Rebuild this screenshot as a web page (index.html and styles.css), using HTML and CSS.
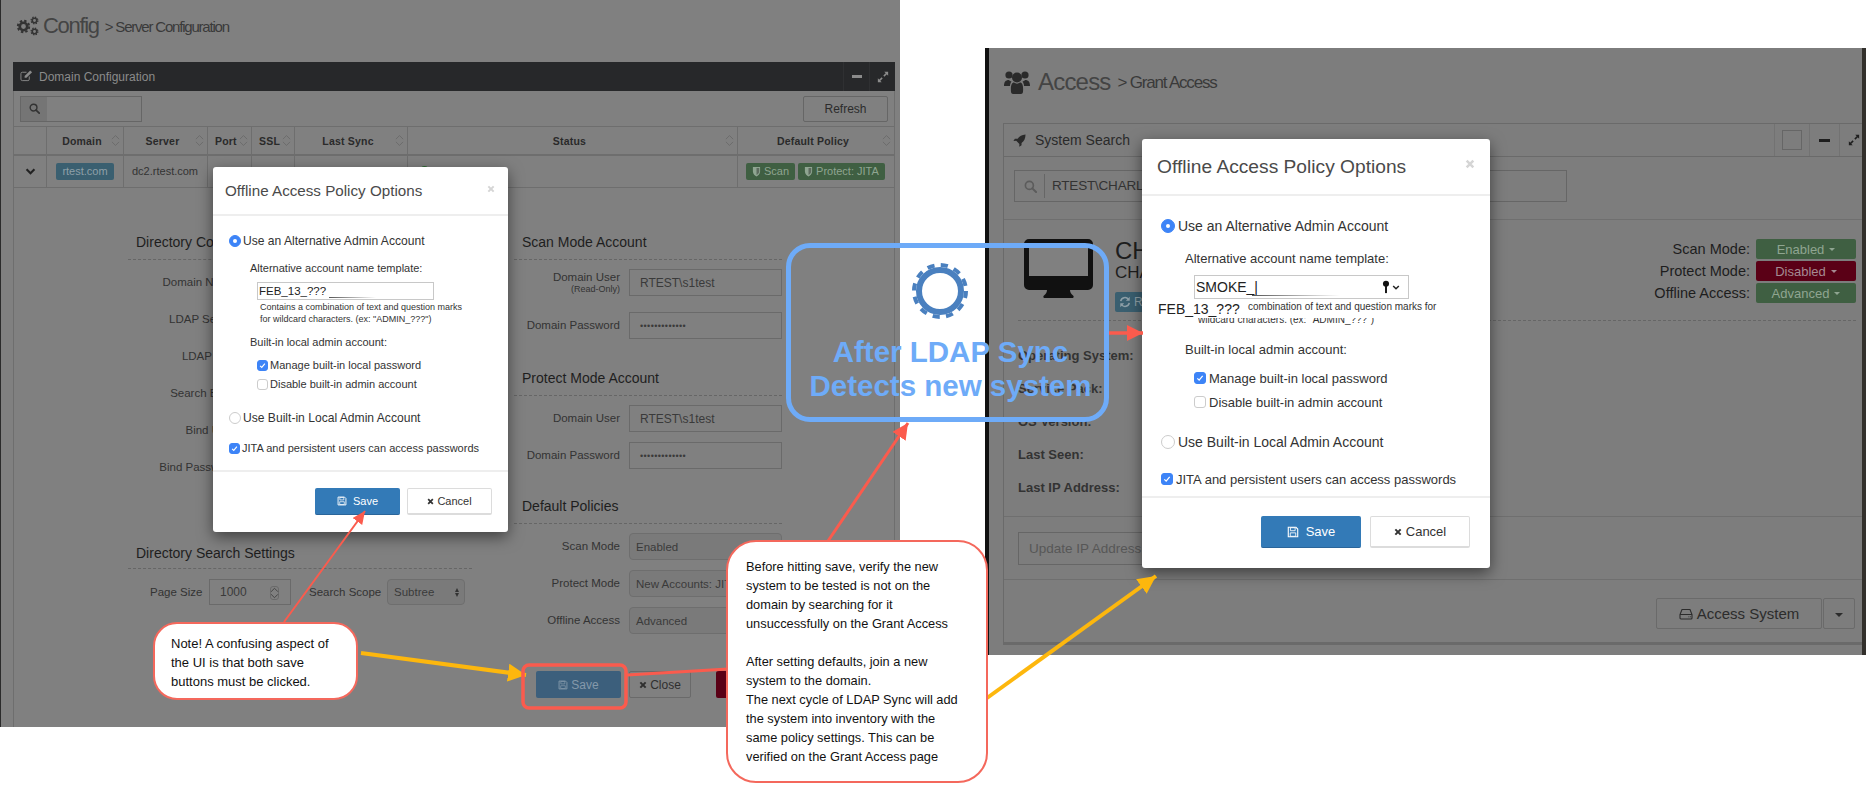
FILE: index.html
```html
<!DOCTYPE html>
<html>
<head>
    <meta charset="UTF-8">
    <title>LDAP Sync - Offline Access Policy</title>
    <link rel="stylesheet" href="styles.css">
</head>
<body>
<svg class="sprite" width="0" height="0">
    <defs>
        <symbol id="i-cog" viewBox="0 0 20 20">
            <circle cx="10" cy="10" r="5" fill="none" stroke="currentColor" stroke-width="3.6"/>
            <circle cx="10" cy="10" r="7.6" fill="none" stroke="currentColor" stroke-width="2.6" stroke-dasharray="3.2 2.77"/>
        </symbol>
        <symbol id="i-edit" viewBox="0 0 14 14">
            <path d="M10 8v3a1.5 1.5 0 0 1-1.500 1.500h-6A1.500 1.500 0 0 1 1 11V5a1.500 1.500 0 0 1 1.500-1.500H7" fill="none" stroke="currentColor" stroke-width="1"/>
            <path d="M5 7.500 11 1.500 13 3.500 7 9.500H5z" fill="currentColor"/>
        </symbol>
        <symbol id="i-search" viewBox="0 0 14 14">
            <circle cx="5.800" cy="5.800" r="4.300" fill="none" stroke="currentColor" stroke-width="1.800"/>
            <path d="M9 9l4 4" stroke="currentColor" stroke-width="2.200" stroke-linecap="round"/>
        </symbol>
        <symbol id="i-sort" viewBox="0 0 10 14">
            <path d="M1 5.500 5 1.500l4 4M1 8.500l4 4 4-4" fill="none" stroke="currentColor" stroke-width="1"/>
        </symbol>
        <symbol id="i-chevron" viewBox="0 0 12 8">
            <path d="M1.500 1.500 6 6l4.500-4.500" fill="none" stroke="currentColor" stroke-width="2.400"/>
        </symbol>
        <symbol id="i-shield" viewBox="0 0 10 12">
            <path d="M1 1h8v5c0 3-2.500 4.500-4 5.500C3.500 10.500 1 9 1 6z" fill="currentColor"/>
            <path d="M5 2v8c1-.7 3-2 3-4V2z" fill="#000" fill-opacity=".35"/>
        </symbol>
        <symbol id="i-expand" viewBox="0 0 14 14">
            <path d="M8 6l4-4M6 8l-4 4" stroke="currentColor" stroke-width="1.800"/>
            <path d="M8.500 1H13v4.500zM5.500 13H1V8.500z" fill="currentColor"/>
        </symbol>
        <symbol id="i-save" viewBox="0 0 14 14">
            <path d="M1.500 1.500h9l2 2v9h-11z" fill="none" stroke="currentColor" stroke-width="1.300"/>
            <path d="M4 2h5.500v3.500H4zM3.800 8h6.400v4H3.800z" fill="none" stroke="currentColor" stroke-width="1"/>
        </symbol>
        <symbol id="i-times" viewBox="0 0 12 12">
            <path d="M2 2l8 8M10 2l-8 8" stroke="currentColor" stroke-width="3"/>
        </symbol>
        <symbol id="i-rocket" viewBox="0 0 14 14">
            <path d="M13.500.5c-4 .2-6.500 1.800-8.500 4.500H2L.5 7.500l3-.2 3.400 3.400-.2 3 2.500-1.500V9.700c2.700-2 4.200-4.700 4.300-9.200z" fill="currentColor"/>
        </symbol>
        <symbol id="i-users" viewBox="0 0 26 24">
            <circle cx="5" cy="5" r="3.600" fill="currentColor"/>
            <circle cx="21" cy="5" r="3.600" fill="currentColor"/>
            <circle cx="13" cy="7.500" r="5" fill="currentColor"/>
            <path d="M0 16c0-4 1.500-6 5-6 1 1 1.500 1.300 2.500 1.500-1 1.500-1.500 2.800-1.500 4.500zM26 16c0-4-1.500-6-5-6-1 1-1.500 1.300-2.500 1.500 1 1.500 1.500 2.800 1.500 4.500z" fill="currentColor"/>
            <path d="M7 22c-.5-6 .5-9.500 3-9.500 2 1.500 4 1.500 6 0 2.500 0 3.500 3.500 3 9.500-.2 1.300-1 2-2 2H9c-1 0-1.800-.7-2-2z" fill="currentColor"/>
        </symbol>
        <symbol id="i-monitor" viewBox="0 0 69 59">
            <path d="M5 0h59a5 5 0 0 1 5 5v41a5 5 0 0 1-5 5H46c0 2 1 4 3 5.500 1 .7 1 2.500-1 2.500H21c-2 0-2-1.800-1-2.500 2-1.500 3-3.500 3-5.500H5a5 5 0 0 1-5-5V5a5 5 0 0 1 5-5z" fill="currentColor"/>
            <rect x="5" y="5" width="59" height="32" fill="#808080"/>
        </symbol>
        <symbol id="i-refresh" viewBox="0 0 14 14">
            <path d="M2 6a5 5 0 0 1 9-2M12 8a5 5 0 0 1-9 2" fill="none" stroke="currentColor" stroke-width="1.700"/>
            <path d="M12.500 1v4.500H8zM1.500 13V8.500H6z" fill="currentColor"/>
        </symbol>
        <symbol id="i-hdd" viewBox="0 0 14 12">
            <path d="M3 1.500h8l2 5v3.500a1 1 0 0 1-1 1H2a1 1 0 0 1-1-1V6.500zM1 6.500h12" fill="none" stroke="currentColor" stroke-width="1.100"/>
            <path d="M9.500 8.800h.8M11.200 8.800h.8" stroke="currentColor" stroke-width="1"/>
        </symbol>
        <symbol id="i-key" viewBox="0 0 10 16">
            <circle cx="5" cy="4" r="3.800" fill="currentColor"/>
            <path d="M3.800 6h2.400v8.500L5 16l-1.200-1.500z" fill="currentColor"/>
        </symbol>
        <symbol id="i-tick" viewBox="0 0 12 12">
            <path d="M2.800 6.400 5 8.600l4.200-5.200" fill="none" stroke="#fff" stroke-width="1.500"/>
        </symbol>
    </defs>
</svg>

<div class="canvas">

    <!-- left screenshot: server configuration -->
    <section class="shot shot-config">
        <div class="page-title">
            <span class="title-cogs">
                <svg class="cog-big"><use href="#i-cog"/></svg>
                <svg class="cog-a"><use href="#i-cog"/></svg>
                <svg class="cog-b"><use href="#i-cog"/></svg>
            </span>
            <span class="title-main">Config</span>
            <span class="title-sub">&gt; Server Configuration</span>
        </div>

        <div class="panel">
            <div class="panel-head">
                <svg class="ic-edit"><use href="#i-edit"/></svg>
                <span class="panel-name">Domain Configuration</span>
                <span class="head-tool"><i class="minus"></i></span>
                <span class="head-tool"><svg class="ic-expand"><use href="#i-expand"/></svg></span>
            </div>
            <div class="toolbar">
                <div class="search-mini">
                    <span class="search-addon"><svg class="ic-search"><use href="#i-search"/></svg></span>
                </div>
                <div class="btn-refresh">Refresh</div>
            </div>
            <div class="tbl tbl-head">
                <div class="th"></div>
                <div class="th">Domain<svg class="ic-sort"><use href="#i-sort"/></svg></div>
                <div class="th">Server<svg class="ic-sort"><use href="#i-sort"/></svg></div>
                <div class="th th-narrow">Port<svg class="ic-sort"><use href="#i-sort"/></svg></div>
                <div class="th th-narrow">SSL<svg class="ic-sort"><use href="#i-sort"/></svg></div>
                <div class="th">Last Sync<svg class="ic-sort"><use href="#i-sort"/></svg></div>
                <div class="th">Status<svg class="ic-sort"><use href="#i-sort"/></svg></div>
                <div class="th">Default Policy<svg class="ic-sort"><use href="#i-sort"/></svg></div>
            </div>
            <div class="tbl tbl-row">
                <div class="td td-center"><svg class="ic-chevron"><use href="#i-chevron"/></svg></div>
                <div class="td td-center"><span class="tag tag-teal">rtest.com</span></div>
                <div class="td td-text">dc2.rtest.com</div>
                <div class="td"></div>
                <div class="td"></div>
                <div class="td"></div>
                <div class="td td-status"><i class="dot"></i></div>
                <div class="td td-policy">
                    <span class="tag tag-green"><svg class="ic-shield"><use href="#i-shield"/></svg>Scan</span>
                    <span class="tag tag-green"><svg class="ic-shield"><use href="#i-shield"/></svg>Protect: JITA</span>
                </div>
            </div>

            <div class="form">
                <div class="form-col">
                    <h3 class="form-title">Directory Configuration</h3>
                    <div class="left-row">Domain Name</div>
                    <div class="left-row">LDAP Server</div>
                    <div class="left-row">LDAP Port</div>
                    <div class="left-row">Search Base</div>
                    <div class="left-row">Bind User</div>
                    <div class="left-row">Bind Password</div>
                    <h3 class="form-title title-search">Directory Search Settings</h3>
                    <div class="search-settings">
                        <span class="lbl-page">Page Size</span>
                        <span class="field field-page">1000<span class="spin"><svg class="ic-sort"><use href="#i-sort"/></svg></span></span>
                        <span class="lbl-scope">Search Scope</span>
                        <span class="select select-scope">Subtree<i class="double-caret"></i></span>
                    </div>
                </div>
                <div class="form-col">
                    <h3 class="form-title">Scan Mode Account</h3>
                    <div class="field-row row-tall">
                        <label>Domain User<small>(Read-Only)</small></label>
                        <span class="field">RTEST\s1test</span>
                    </div>
                    <div class="field-row">
                        <label>Domain Password</label>
                        <span class="field field-pass">•••••••••••••</span>
                    </div>
                    <h3 class="form-title title-protect">Protect Mode Account</h3>
                    <div class="field-row">
                        <label>Domain User</label>
                        <span class="field">RTEST\s1test</span>
                    </div>
                    <div class="field-row">
                        <label>Domain Password</label>
                        <span class="field field-pass">•••••••••••••</span>
                    </div>
                    <h3 class="form-title title-default">Default Policies</h3>
                    <div class="field-row">
                        <label>Scan Mode</label>
                        <span class="select">Enabled</span>
                    </div>
                    <div class="field-row">
                        <label>Protect Mode</label>
                        <span class="select">New Accounts: JITA</span>
                    </div>
                    <div class="field-row">
                        <label>Offline Access</label>
                        <span class="select">Advanced</span>
                    </div>
                    <div class="form-actions">
                        <span class="act act-save"><svg class="ic-save"><use href="#i-save"/></svg>Save</span>
                        <span class="act act-close"><svg class="ic-times"><use href="#i-times"/></svg>Close</span>
                        <span class="act act-red"></span>
                    </div>
                </div>
            </div>
        </div>

        <div class="modal modal-sm">
            <div class="modal-head">
                <span class="modal-title">Offline Access Policy Options</span>
                <svg class="modal-x"><use href="#i-times"/></svg>
            </div>
            <div class="modal-body">
                <div class="opt opt-first"><i class="radio on"></i>Use an Alternative Admin Account</div>
                <div class="opt-label opt-template">Alternative account name template:</div>
                <div class="tpl-input"><span>FEB_13_???</span><i class="fade-line"></i></div>
                <div class="help">
                    <p>Contains a combination of text and question marks</p>
                    <p>for wildcard characters. (ex: "ADMIN_???")</p>
                </div>
                <div class="opt-label opt-builtin">Built-in local admin account:</div>
                <div class="opt opt-sub opt-manage"><i class="check on"><svg><use href="#i-tick"/></svg></i>Manage built-in local password</div>
                <div class="opt opt-sub opt-disable"><i class="check"></i>Disable built-in admin account</div>
                <div class="opt opt-local"><i class="radio"></i>Use Built-in Local Admin Account</div>
                <div class="opt opt-jita"><i class="check on"><svg><use href="#i-tick"/></svg></i>JITA and persistent users can access passwords</div>
            </div>
            <div class="modal-foot">
                <span class="mbtn mbtn-primary"><svg class="ic-save"><use href="#i-save"/></svg>Save</span>
                <span class="mbtn mbtn-plain"><svg class="ic-times"><use href="#i-times"/></svg>Cancel</span>
            </div>
        </div>
    </section>

    <!-- right screenshot: grant access -->
    <section class="shot shot-access">
        <div class="page-title">
            <svg class="ic-users"><use href="#i-users"/></svg>
            <span class="title-main">Access</span>
            <span class="title-sub">&gt; Grant Access</span>
        </div>

        <div class="panel">
            <div class="panel-head">
                <svg class="ic-rocket"><use href="#i-rocket"/></svg>
                <span class="panel-name">System Search</span>
                <span class="head-tool tool-check"><i class="box"></i></span>
                <span class="head-tool tool-min"><i class="minus"></i></span>
                <span class="head-tool tool-exp"><svg class="ic-expand"><use href="#i-expand"/></svg></span>
            </div>
            <div class="search-wrap">
                <div class="search-big">
                    <svg class="ic-search"><use href="#i-search"/></svg>
                    <span class="search-text">RTEST\CHARLIE</span>
                </div>
            </div>
            <div class="system">
                <div class="system-top">
                    <svg class="ic-monitor"><use href="#i-monitor"/></svg>
                    <div class="system-name">
                        <div class="name-main">CHARLIE</div>
                        <div class="name-sub">CHARLIE</div>
                        <span class="tag-refresh"><svg><use href="#i-refresh"/></svg>Refresh</span>
                    </div>
                    <div class="system-modes">
                        <div class="mode"><span>Scan Mode:</span><b class="mode-btn mode-green">Enabled<i class="caret"></i></b></div>
                        <div class="mode"><span>Protect Mode:</span><b class="mode-btn mode-red">Disabled<i class="caret"></i></b></div>
                        <div class="mode"><span>Offline Access:</span><b class="mode-btn mode-green">Advanced<i class="caret"></i></b></div>
                    </div>
                </div>
                <div class="facts">
                    <div>Operating System:</div>
                    <div>Service Pack:</div>
                    <div>OS Version:</div>
                    <div>Last Seen:</div>
                    <div>Last IP Address:</div>
                </div>
            </div>
            <div class="update-ip">
                <div class="update-box">Update IP Address</div>
            </div>
            <div class="access-actions">
                <span class="access-btn"><svg class="ic-hdd"><use href="#i-hdd"/></svg>Access System</span>
                <span class="access-more"><i class="caret"></i></span>
            </div>
        </div>

        <div class="modal modal-lg">
            <div class="modal-head">
                <span class="modal-title">Offline Access Policy Options</span>
                <svg class="modal-x"><use href="#i-times"/></svg>
            </div>
            <div class="modal-body">
                <div class="opt opt-first"><i class="radio on"></i>Use an Alternative Admin Account</div>
                <div class="opt-label opt-template">Alternative account name template:</div>
                <div class="tpl-input"><span>SMOKE_|</span><i class="fade-line"></i><svg class="ic-key"><use href="#i-key"/></svg><svg class="ic-chevron"><use href="#i-chevron"/></svg></div>
                <div class="help">
                    <p class="help-rest">combination of text and question marks for</p>
                    <p class="help-cut"><span>wildcard characters. (ex: "ADMIN_???")</span></p>
                </div>
                <div class="opt-label opt-builtin">Built-in local admin account:</div>
                <div class="opt opt-sub opt-manage"><i class="check on"><svg><use href="#i-tick"/></svg></i>Manage built-in local password</div>
                <div class="opt opt-sub opt-disable"><i class="check"></i>Disable built-in admin account</div>
                <div class="opt opt-local"><i class="radio"></i>Use Built-in Local Admin Account</div>
                <div class="opt opt-jita"><i class="check on"><svg><use href="#i-tick"/></svg></i>JITA and persistent users can access passwords</div>
            </div>
            <div class="modal-foot">
                <span class="mbtn mbtn-primary"><svg class="ic-save"><use href="#i-save"/></svg>Save</span>
                <span class="mbtn mbtn-plain"><svg class="ic-times"><use href="#i-times"/></svg>Cancel</span>
            </div>
            <span class="pasted-text">FEB_13_???</span>
        </div>
    </section>

    <!-- annotations drawn over both screenshots -->
    <svg class="arrows" viewBox="0 0 1866 785">
        <defs>
            <marker id="head-red" markerUnits="userSpaceOnUse" markerWidth="18" markerHeight="18" refX="16" refY="8" orient="auto">
                <path d="M0 0 16 8 0 16z" fill="#fb5b4d"/>
            </marker>
            <marker id="head-red-sm" markerUnits="userSpaceOnUse" markerWidth="14" markerHeight="14" refX="13" refY="6" orient="auto">
                <path d="M0 0 13 6 0 12z" fill="#fb5b4d"/>
            </marker>
            <marker id="head-yellow" markerUnits="userSpaceOnUse" markerWidth="20" markerHeight="20" refX="18" refY="9" orient="auto">
                <path d="M0 0 18 9 0 18z" fill="#fdb70d"/>
            </marker>
        </defs>
        <line x1="284" y1="622" x2="365" y2="511" stroke="#fb5b4d" stroke-width="2" marker-end="url(#head-red-sm)"/>
        <line x1="361" y1="653" x2="526" y2="675" stroke="#fdb70d" stroke-width="4" marker-end="url(#head-yellow)"/>
        <rect x="523" y="665" width="103" height="43" rx="6" fill="none" stroke="#fb5b4d" stroke-width="3.500"/>
        <line x1="627" y1="675" x2="728" y2="669" stroke="#fb5b4d" stroke-width="3"/>
        <line x1="828" y1="541" x2="908" y2="423" stroke="#fb5b4d" stroke-width="3" marker-end="url(#head-red)"/>
        <line x1="1108" y1="333" x2="1143" y2="333" stroke="#fb5b4d" stroke-width="3.500" marker-end="url(#head-red)"/>
        <line x1="987" y1="698" x2="1156" y2="576" stroke="#fdb70d" stroke-width="4" marker-end="url(#head-yellow)"/>
    </svg>

    <div class="sync-box">
        <svg class="sync-gear" viewBox="0 0 56 56">
            <circle cx="28" cy="28" r="21" fill="none" stroke="#4a80bf" stroke-width="6"/>
            <circle cx="28" cy="28" r="26" fill="none" stroke="#4a80bf" stroke-width="4" stroke-dasharray="7.200 6.413"/>
        </svg>
        <div class="sync-text">After LDAP Sync<br>Detects new system</div>
    </div>

    <div class="bubble bubble-note">Note! A confusing aspect of the UI is that both save buttons must be clicked.</div>
    <div class="bubble bubble-steps">
        <p>Before hitting save, verify the new system to be tested is not on the domain by searching for it unsuccessfully on the Grant Access</p>
        <p>After setting defaults, join a new system to the domain.<br>The next cycle of LDAP Sync will add the system into inventory with the same policy settings. This can be verified on the Grant Access page</p>
    </div>
</div>
</body>
</html>
```

FILE: styles.css
```css
* {
    margin: 0;
    padding: 0;
    box-sizing: border-box;
}
body {
    background: #fff;
    font-family: "Liberation Sans", Arial, sans-serif;
    color: #2a2a2a;
    overflow: hidden;
}
.sprite {
    position: absolute;
}
.canvas {
    position: relative;
    width: 1866px;
    height: 785px;
    background: #fff;
    overflow: hidden;
}

/* the two screenshots sit on the canvas like pasted pictures */
.shot {
    position: absolute;
    top: 0;
    overflow: hidden;
}
.shot-config {
    left: 0;
    width: 900px;
    height: 727px;
    background: #808080;
    border-left: 1px solid #2b2b2b;
}
.shot-access {
    left: 985px;
    top: 48px;
    width: 881px;
    height: 607px;
    background: #7d7d7d;
    border-left: 4px solid #111;
    border-right: 4px solid #33302c;
}

.page-title {
    display: flex;
    align-items: center;
}
.title-main {
    color: #444;
    font-weight: 400;
}
.title-sub {
    color: #3a3a3a;
}
.shot-config .page-title {
    height: 52px;
    padding-left: 15px;
}
.shot-config .title-main {
    font-size: 22px;
    letter-spacing: -1.300px;
    margin-left: 5px;
}
.shot-config .title-sub {
    font-size: 15px;
    letter-spacing: -1.200px;
    margin-left: 6px;
}
.title-cogs {
    position: relative;
    display: block;
    width: 22px;
    height: 20px;
    color: #333;
}
.title-cogs svg {
    position: absolute;
}
.cog-big {
    left: 0;
    top: 3px;
    width: 15px;
    height: 15px;
}
.cog-a {
    left: 14px;
    top: 0;
    width: 9px;
    height: 9px;
}
.cog-b {
    left: 14px;
    top: 11px;
    width: 9px;
    height: 9px;
}

/* panels */
.shot-config .panel {
    margin: 10px 5px 0 12px;
    height: 665px;
    border-left: 1px solid #6e6e6e;
    border-right: 1px solid #6e6e6e;
}
.panel-head {
    display: flex;
    align-items: center;
}
.shot-config .panel-head {
    height: 29px;
    margin-left: -1px;
    margin-right: -1px;
    background: #27282a;
    color: #8b8b8b;
    padding-left: 7px;
    font-size: 12px;
}
.ic-edit {
    width: 13px;
    height: 13px;
    margin-top: -3px;
}
.shot-config .panel-name {
    margin-left: 6px;
    flex: 1;
}
.shot-config .head-tool {
    display: flex;
    align-items: center;
    justify-content: center;
    height: 29px;
    width: 26px;
    border-left: 1px solid #2f3032;
}
.minus {
    display: block;
    width: 10px;
    height: 2.500px;
    background: currentColor;
}
.ic-expand {
    width: 12px;
    height: 12px;
}
.toolbar {
    display: flex;
    justify-content: space-between;
    align-items: center;
    height: 36px;
    padding: 0 6px 0 6px;
    border-bottom: 1px solid #6e6e6e;
}
.search-mini {
    display: flex;
    width: 122px;
    height: 26px;
    border: 1px solid #666;
}
.search-addon {
    display: flex;
    align-items: center;
    justify-content: center;
    width: 26px;
    background: #757575;
    color: #333;
}
.ic-search {
    width: 11px;
    height: 11px;
}
.btn-refresh {
    width: 85px;
    height: 26px;
    border: 1px solid #666;
    border-radius: 2px;
    text-align: center;
    font-size: 12px;
    line-height: 24px;
    color: #2c2c2c;
}

/* table */
.tbl {
    display: grid;
    grid-template-columns: 33px 77px 84px 44px 43px 113px 330px 156px;
}
.tbl-head {
    height: 29px;
    border-bottom: 2px solid #6e6e6e;
}
.tbl-row {
    height: 32px;
    border-bottom: 1px solid #6e6e6e;
}
.th {
    position: relative;
    display: flex;
    align-items: center;
    justify-content: center;
    border-right: 1px solid #6e6e6e;
    font-size: 10.500px;
    font-weight: 700;
    letter-spacing: .2px;
    color: #2a2a2a;
    padding-right: 6px;
}
.th:last-child {
    border-right: 0;
}
.th-narrow {
    justify-content: flex-start;
    padding-left: 7px;
}
.ic-sort {
    position: absolute;
    right: 3px;
    top: 7px;
    width: 9px;
    height: 13px;
    color: #6a6a6a;
}
.td {
    display: flex;
    align-items: center;
    border-right: 1px solid #6e6e6e;
    min-width: 0;
}
.td:last-child {
    border-right: 0;
}
.td-center {
    justify-content: center;
}
.td-text {
    padding: 0 8px;
    padding-bottom: 1px;
    font-size: 11px;
    color: #333;
    white-space: nowrap;
}
.td-status {
    align-items: flex-start;
    padding: 10px 0 0 12px;
}
.td-policy {
    gap: 3px;
    padding: 0 0 1px 8px;
}
.ic-chevron {
    width: 11px;
    height: 7px;
    color: #222;
}
.dot {
    display: block;
    width: 9px;
    height: 9px;
    border-radius: 50%;
    background: #2f6a34;
}
.tag {
    display: inline-flex;
    align-items: center;
    height: 17px;
    border-radius: 2px;
    font-size: 11px;
    white-space: nowrap;
}
.tag-teal {
    width: 58px;
    justify-content: center;
    margin-bottom: 1px;
    background: #3a5f70;
    color: #8fa0a8;
}
.tag-green {
    padding: 0 6px 0 6px;
    background: #3f5f42;
    color: #8fa591;
}
.ic-shield {
    width: 9px;
    height: 11px;
    margin-right: 3px;
}

/* config form */
.form {
    display: grid;
    grid-template-columns: 344px 268px;
    column-gap: 42px;
    padding: 43px 0 0 114px;
}
.form-col {
    font-size: 11.500px;
    min-width: 0;
}
.form-title {
    height: 29px;
    border-bottom: 1px dashed #666;
    margin-bottom: 9px;
    padding-left: 8px;
    font-size: 14px;
    font-weight: 400;
    line-height: 23px;
    color: #1e1e1e;
    white-space: nowrap;
}
.left-row {
    height: 27px;
    margin-bottom: 10px;
    width: 108px;
    text-align: right;
    line-height: 27px;
    color: #333;
    white-space: nowrap;
}
.title-search {
    margin-top: 59px;
    margin-bottom: 10px;
    line-height: 26px;
}
.search-settings {
    display: flex;
    align-items: center;
    height: 26px;
    padding-left: 22px;
    color: #333;
}
.lbl-page {
    width: 59px;
}
.lbl-scope {
    margin-left: 18px;
    width: 78px;
}
.field {
    display: flex;
    align-items: center;
    height: 27px;
    width: 153px;
    padding-left: 10px;
    border: 1px solid #6a6a6a;
    color: #3a3a3a;
    font-size: 12px;
}
.field-page {
    position: relative;
    width: 82px;
    height: 26px;
}
.spin {
    position: absolute;
    right: 11px;
    top: 6px;
    width: 9px;
    height: 14px;
    border: 1px solid #6a6a6a;
    border-radius: 3px;
}
.spin .ic-sort {
    right: -1px;
    top: 0;
    width: 9px;
    height: 12px;
    color: #3a3a3a;
}
.field-pass {
    font-size: 9px;
    letter-spacing: .4px;
}
.select {
    display: flex;
    align-items: center;
    position: relative;
    height: 27px;
    width: 153px;
    padding-left: 6px;
    border: 1px solid #6e6e6e;
    border-radius: 4px;
    background: #7a7a7a;
    color: #3a3a3a;
    font-size: 11.500px;
    white-space: nowrap;
    overflow: hidden;
}
.select-scope {
    width: 78px;
    height: 26px;
}
.double-caret {
    position: absolute;
    right: 5px;
    top: 8px;
    border-left: 2.500px solid transparent;
    border-right: 2.500px solid transparent;
    border-bottom: 4px solid #333;
}
.double-caret::after {
    content: "";
    position: absolute;
    left: -2.500px;
    top: 5px;
    border-left: 2.500px solid transparent;
    border-right: 2.500px solid transparent;
    border-top: 4px solid #333;
}
.field-row {
    display: grid;
    grid-template-columns: 106px 153px;
    column-gap: 9px;
    align-items: center;
    height: 27px;
    margin-bottom: 10px;
}
.field-row label {
    text-align: right;
    color: #333;
    line-height: 13px;
}
.field-row small {
    display: block;
    font-size: 9px;
    line-height: 11px;
}
.row-tall {
    margin-bottom: 16px;
}
.title-protect {
    margin-top: 28px;
}
.title-default {
    margin-top: 26px;
}
.form-actions {
    display: flex;
    margin-top: 37px;
    padding-left: 22px;
    font-size: 12px;
}
.act {
    display: flex;
    flex: none;
    align-items: center;
    justify-content: center;
    height: 27px;
    border-radius: 2px;
}
.act-save {
    width: 85px;
    background: #3c5f7c;
    color: #8499ab;
}
.act-save .ic-save {
    width: 10px;
    height: 10px;
    margin-right: 3px;
}
.act-close {
    width: 62px;
    margin-left: 8px;
    border: 1px solid #6a6a6a;
    color: #2f2f2f;
}
.act-close .ic-times {
    width: 8px;
    height: 8px;
    margin-right: 3px;
}
.act-red {
    width: 85px;
    margin-left: 25px;
    background: #5a0016;
}

/* access screen */
.shot-access .page-title {
    height: 68px;
    padding: 0 0 0 15px;
}
.ic-users {
    width: 26px;
    height: 24px;
    color: #2a2a2a;
}
.shot-access .title-main {
    font-size: 24px;
    letter-spacing: -.800px;
    margin-left: 8px;
}
.shot-access .title-sub {
    font-size: 17px;
    letter-spacing: -1.200px;
    margin-left: 7px;
    padding-top: 2px;
}
.shot-access .panel {
    margin: 7px 0 0 14px;
    height: 522px;
    border-top: 1px solid #6a6a6a;
    border-left: 1px solid #6a6a6a;
    border-bottom: 3px solid #6a6a6a;
}
.shot-access .panel-head {
    height: 33px;
    padding-left: 9px;
    border-bottom: 1px solid #6a6a6a;
    font-size: 14px;
    color: #2a2a2a;
}
.ic-rocket {
    width: 13px;
    height: 13px;
}
.shot-access .panel-name {
    margin-left: 9px;
    flex: 1;
}
.shot-access .head-tool {
    display: flex;
    align-items: center;
    justify-content: center;
    height: 32px;
    border-left: 1px solid #727272;
}
.tool-check {
    width: 35px;
}
.tool-min {
    width: 30px;
}
.tool-exp {
    width: 23px;
    justify-content: flex-start !important;
    padding-left: 8px;
}
.box {
    display: block;
    width: 20px;
    height: 20px;
    border: 1px solid #666;
}
.shot-access .minus {
    width: 11px;
    height: 3px;
    color: #1e1e1e;
}
.shot-access .ic-expand {
    flex: none;
    color: #1e1e1e;
}
.search-wrap {
    height: 63px;
    padding: 13px 0 0 10px;
    border-bottom: 1px solid #6f6f6f;
}
.search-big {
    display: flex;
    align-items: center;
    width: 553px;
    height: 32px;
    border: 1px solid #666;
    color: #333;
}
.search-big .ic-search {
    width: 13px;
    height: 13px;
    margin-left: 9px;
    color: #5c5c5c;
}
.search-text {
    margin-left: 7px;
    padding-left: 7px;
    border-left: 1px solid #666;
    line-height: 24px;
    font-size: 13.500px;
    letter-spacing: -.2px;
}
.system {
    height: 297px;
    padding: 19px 6px 0 14px;
    border-bottom: 1px solid #6f6f6f;
}
.system-top {
    display: flex;
    height: 82px;
    border-bottom: 1px dashed #666;
}
.ic-monitor {
    width: 69px;
    height: 59px;
    margin-left: 6px;
    color: #111;
}
.system-name {
    width: 200px;
    margin-left: 22px;
    color: #1e1e1e;
}
.name-main {
    font-size: 24px;
    line-height: 24px;
}
.name-sub {
    font-size: 17px;
    line-height: 20px;
}
.tag-refresh {
    display: flex;
    align-items: center;
    width: 70px;
    height: 20px;
    margin-top: 9px;
    padding-left: 4px;
    border-radius: 2px;
    background: #3a5f70;
    color: #8fa0a8;
    font-size: 12px;
}
.tag-refresh svg {
    width: 12px;
    height: 12px;
    margin-right: 3px;
}
.system-modes {
    margin-left: auto;
    width: 280px;
}
.mode {
    display: flex;
    justify-content: flex-end;
    align-items: center;
    height: 20px;
    margin-bottom: 2px;
    font-size: 14.500px;
    color: #1e1e1e;
    white-space: nowrap;
}
.mode-btn {
    display: flex;
    align-items: center;
    justify-content: center;
    width: 100px;
    height: 20px;
    margin-left: 6px;
    border-radius: 2px;
    font-size: 13px;
    font-weight: 400;
}
.mode-green {
    background: #3f5f42;
    color: #8fa591;
}
.mode-red {
    background: #5a0016;
    color: #a58a92;
}
.caret {
    display: inline-block;
    margin-left: 5px;
    border-left: 3.500px solid transparent;
    border-right: 3.500px solid transparent;
    border-top: 3.500px solid currentColor;
}
.facts {
    padding-top: 27px;
    font-size: 13px;
    font-weight: 700;
    color: #333;
}
.facts div {
    height: 33px;
    line-height: 16px;
}
.update-ip {
    height: 63px;
    padding: 15px 0 0 14px;
    border-bottom: 1px solid #6f6f6f;
}
.update-box {
    width: 300px;
    height: 33px;
    padding-left: 10px;
    border: 1px solid #666;
    line-height: 31px;
    font-size: 13.500px;
    color: #575757;
}
.access-actions {
    display: flex;
    justify-content: flex-end;
    gap: 1px;
    padding: 18px 7px 0 0;
}
.access-btn,
.access-more {
    display: flex;
    align-items: center;
    justify-content: center;
    height: 31px;
    border: 1px solid #6a6a6a;
    border-radius: 2px;
    color: #2c2c2c;
}
.access-btn {
    width: 166px;
    font-size: 15px;
}
.access-more {
    width: 32px;
}
.ic-hdd {
    width: 14px;
    height: 12px;
    margin-right: 4px;
}
.access-more .caret {
    margin: 2px 0 0;
    border-left-width: 4px;
    border-right-width: 4px;
    border-top-width: 4px;
}

/* modal dialogs */
.modal {
    position: absolute;
    display: flex;
    flex-direction: column;
    background: #fff;
    border-radius: 3px;
    box-shadow: 0 5px 15px rgba(0, 0, 0, .5);
    color: #333;
}
.modal-sm {
    left: 212px;
    top: 167px;
    width: 295px;
    height: 365px;
    font-size: 11px;
}
.modal-lg {
    left: 153px;
    top: 91px;
    width: 348px;
    height: 429px;
    font-size: 13px;
}
.modal-head {
    display: flex;
    align-items: center;
    justify-content: space-between;
    border-bottom: 2px solid #eee;
}
.modal-sm .modal-head {
    height: 49px;
    padding: 0 13px 0 12px;
}
.modal-lg .modal-head {
    height: 57px;
    padding: 0 15px 0 15px;
}
.modal-title {
    color: #4a4a4a;
}
.modal-sm .modal-title {
    font-size: 15.200px;
}
.modal-lg .modal-title {
    font-size: 19.200px;
}
.modal-x {
    color: #d5d5d5;
}
.modal-sm .modal-x {
    width: 8px;
    height: 8px;
    margin-top: -3px;
}
.modal-lg .modal-x {
    width: 10px;
    height: 10px;
    margin-top: -5px;
}
.modal-body {
    flex: 1;
}
.opt,
.opt-label {
    display: flex;
    align-items: center;
    white-space: nowrap;
}
.opt svg {
    display: block;
    width: 100%;
    height: 100%;
}
.radio,
.check {
    display: block;
    flex: none;
    background: #fff;
    border: 1.500px solid #ccc;
}
.radio {
    position: relative;
    border-radius: 50%;
}
.check {
    border-radius: 3px;
}
.radio.on,
.check.on {
    background: #3d84f7;
    border-color: #3d84f7;
}
.radio.on::after {
    content: "";
    position: absolute;
    left: 50%;
    top: 50%;
    width: 4px;
    height: 4px;
    margin: -2px 0 0 -2px;
    border-radius: 50%;
    background: #fff;
}
.modal-foot {
    display: flex;
    justify-content: flex-end;
    border-top: 2px solid #eee;
}
.mbtn {
    display: flex;
    align-items: center;
    justify-content: center;
    border-radius: 2px;
    white-space: nowrap;
}
.mbtn-primary {
    background: #337ab7;
    border-bottom: 1px solid #2a659a;
    color: #fff;
}
.mbtn-plain {
    background: #fff;
    border: 1px solid #dcdcdc;
    border-bottom-width: 2px;
    color: #333;
}
.tpl-input {
    display: flex;
    align-items: center;
    position: relative;
    border: 1px solid #c8c8c8;
    color: #222;
}
.fade-line {
    position: absolute;
    height: 1px;
    background: linear-gradient(90deg, #555, rgba(85, 85, 85, 0));
}
.help p {
    white-space: nowrap;
}

/* small dialog spacing */
.modal-sm .modal-body {
    padding: 17px 0 0 16px;
}
.modal-sm .opt,
.modal-sm .opt-label {
    height: 16px;
}
.modal-sm .opt-first,
.modal-sm .opt-local {
    font-size: 12.100px;
}
.modal-sm .radio {
    width: 12px;
    height: 12px;
    margin-right: 2px;
}
.modal-sm .check {
    width: 11px;
    height: 11px;
    margin-right: 2px;
}
.modal-sm .opt-template {
    margin: 11px 0 0 21px;
}
.modal-sm .tpl-input {
    width: 177px;
    height: 18px;
    margin: 6px 0 0 28px;
    padding-left: 1px;
    font-size: 11.500px;
}
.modal-sm .fade-line {
    left: 71px;
    bottom: 1px;
    width: 47px;
}
.modal-sm .help {
    margin: 1px 0 0 31px;
    font-size: 9px;
    line-height: 12px;
}
.modal-sm .opt-builtin {
    margin: 9px 0 0 21px;
}
.modal-sm .opt-sub {
    margin-left: 28px;
}
.modal-sm .opt-manage {
    margin-top: 7px;
}
.modal-sm .opt-disable {
    margin-top: 3px;
}
.modal-sm .opt-local {
    margin-top: 18px;
}
.modal-sm .opt-jita {
    margin-top: 14px;
}
.modal-sm .modal-foot {
    height: 62px;
    gap: 7px;
    padding: 16px 16px 0 0;
}
.modal-sm .mbtn {
    width: 85px;
    height: 27px;
}
.modal-sm .ic-save {
    width: 10px;
    height: 10px;
    margin-right: 6px;
}
.modal-sm .ic-times {
    width: 7px;
    height: 7px;
    margin-right: 3px;
}

/* large dialog spacing */
.modal-lg .modal-body {
    padding: 22px 0 0 19px;
}
.modal-lg .opt,
.modal-lg .opt-label {
    height: 16px;
}
.modal-lg .opt-first,
.modal-lg .opt-local {
    font-size: 14px;
}
.modal-lg .radio {
    width: 14px;
    height: 14px;
    margin-right: 3px;
}
.modal-lg .check {
    width: 12px;
    height: 12px;
    margin-right: 3px;
}
.modal-lg .opt-template {
    margin: 16px 0 0 24px;
}
.modal-lg .tpl-input {
    width: 215px;
    height: 24px;
    margin: 9px 0 0 33px;
    padding-left: 1px;
    font-size: 14px;
}
.modal-lg .fade-line {
    left: 57px;
    bottom: 2px;
    width: 88px;
}
.ic-key {
    position: absolute;
    right: 18px;
    top: 4px;
    width: 8px;
    height: 14px;
    color: #111;
}
.tpl-input .ic-chevron {
    position: absolute;
    right: 8px;
    top: 9px;
    width: 8px;
    height: 5px;
    color: #222;
}
.modal-lg .help {
    margin: 1px 0 0 37px;
    font-size: 10px;
}
.help-rest {
    height: 14px;
    line-height: 14px;
    padding-left: 50px;
}
.help-cut {
    display: flex;
    align-items: flex-end;
    overflow: hidden;
    height: 8px;
    margin-top: 4px;
    line-height: 12px;
}
.modal-lg .opt-builtin {
    margin: 15px 0 0 24px;
}
.modal-lg .opt-sub {
    margin-left: 33px;
}
.modal-lg .opt-manage {
    margin-top: 13px;
}
.modal-lg .opt-disable {
    margin-top: 8px;
}
.modal-lg .opt-local {
    margin-top: 24px;
}
.modal-lg .opt-jita {
    margin-top: 21px;
}
.modal-lg .modal-foot {
    height: 72px;
    gap: 9px;
    padding: 18px 20px 0 0;
}
.modal-lg .mbtn {
    width: 100px;
    height: 32px;
}
.modal-lg .ic-save {
    width: 12px;
    height: 12px;
    margin-right: 7px;
}
.modal-lg .ic-times {
    width: 8px;
    height: 8px;
    margin-right: 4px;
}
.pasted-text {
    position: absolute;
    left: 16px;
    top: 162px;
    font-size: 14px;
    line-height: 16px;
    color: #222;
}

/* annotations */
.arrows {
    position: absolute;
    left: 0;
    top: 0;
    width: 1866px;
    height: 785px;
    pointer-events: none;
}
.sync-box {
    position: absolute;
    left: 786px;
    top: 243px;
    width: 323px;
    height: 179px;
    padding-top: 15px;
    border: 5px solid #6eabf8;
    border-radius: 24px;
    text-align: center;
}
.sync-gear {
    display: block;
    width: 56px;
    height: 56px;
    margin: 0 0 16px 121px;
}
.sync-text {
    padding-left: 6px;
    font-size: 29.500px;
    font-weight: 700;
    line-height: 34px;
    color: #6eabf8;
    white-space: nowrap;
}
.bubble {
    position: absolute;
    background: #fff;
    border: 2px solid #f4685c;
    color: #111;
    line-height: 19px;
}
.bubble-note {
    left: 153px;
    top: 622px;
    width: 205px;
    height: 78px;
    padding: 10px 16px;
    border-radius: 24px;
    font-size: 13px;
}
.bubble-steps {
    left: 726px;
    top: 540px;
    width: 262px;
    height: 243px;
    padding: 15px 20px 15px 18px;
    border-radius: 30px;
    font-size: 12.800px;
}
.bubble-steps p + p {
    margin-top: 19px;
}
```
